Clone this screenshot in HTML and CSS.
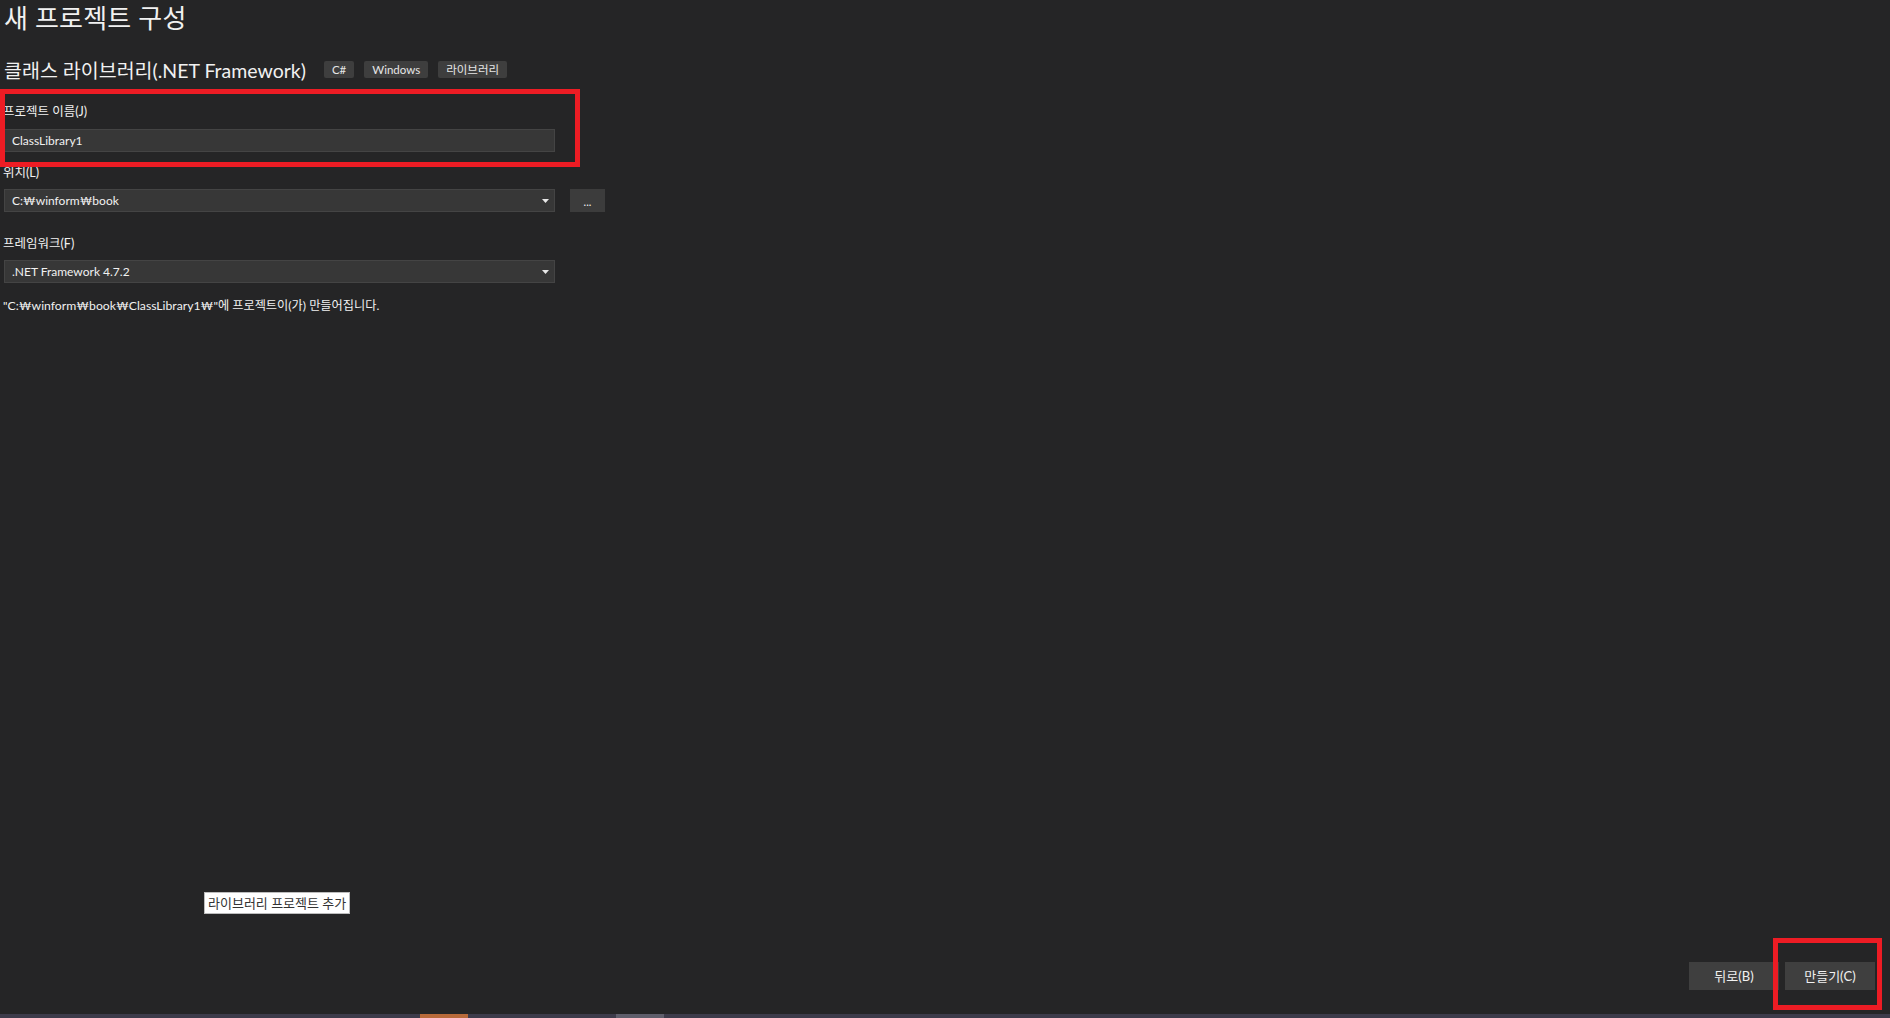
FILE: index.html
```html
<!DOCTYPE html>
<html lang="ko">
<head>
<meta charset="utf-8">
<title>새 프로젝트 구성</title>
<link rel="stylesheet" href="styles.css">
</head>
<body>
<div class="page">
  <main class="content">
    <h1 class="title">새 프로젝트 구성</h1>
    <div class="template-row">
      <h2 class="template-name">클래스 라이브러리(.NET Framework)</h2>
      <div class="tags">
        <span class="tag">C#</span>
        <span class="tag">Windows</span>
        <span class="tag">라이브러리</span>
      </div>
    </div>

    <div class="field field-name">
      <label class="label">프로젝트 이름(J)</label>
      <div class="input">ClassLibrary1</div>
    </div>

    <div class="field field-loc">
      <label class="label">위치(L)</label>
      <div class="input-row">
        <div class="input select">C:₩winform₩book<svg class="arrow" width="7" height="4" viewBox="0 0 7 4"><polygon points="0,0 7,0 3.5,4" fill="#e8e8e8"/></svg></div>
        <button class="browse">...</button>
      </div>
    </div>

    <div class="field field-fw">
      <label class="label">프레임워크(F)</label>
      <div class="input select">.NET Framework 4.7.2<svg class="arrow" width="7" height="4" viewBox="0 0 7 4"><polygon points="0,0 7,0 3.5,4" fill="#e8e8e8"/></svg></div>
    </div>

    <p class="note">"C:₩winform₩book₩ClassLibrary1₩"에 프로젝트이(가) 만들어집니다.</p>
  </main>

  <footer class="actions">
    <button class="btn">뒤로(B)</button>
    <button class="btn">만들기(C)</button>
  </footer>

  <div class="statusbar">
    <span class="seg seg-orange"></span>
    <span class="seg seg-gray"></span>
  </div>

  <div class="highlight hl-name"></div>
  <div class="highlight hl-create"></div>
  <div class="tooltip">라이브러리 프로젝트 추가</div>
</div>
</body>
</html>
```

FILE: styles.css
```css
* { box-sizing: border-box; }
html, body {
  margin: 0;
  padding: 0;
  background: #252526;
}
body {
  font-family: Lato, "Noto Sans CJK KR", sans-serif;
  color: #f1f1f1;
}
.page {
  position: relative;
  width: 1890px;
  height: 1018px;
  display: flex;
  flex-direction: column;
  overflow: hidden;
}
.content {
  flex: 1;
  padding-left: 4px;
}
.title {
  margin: 0;
  height: 36px;
  line-height: 36px;
  font-size: 26px;
  font-weight: 400;
  letter-spacing: 0.2px;
}
.template-row {
  margin-top: 20px;
  height: 30px;
  display: flex;
  align-items: center;
  gap: 18px;
}
.template-name {
  margin: 0;
  font-size: 19.5px;
  font-weight: 400;
  line-height: 30px;
}
.tags {
  display: flex;
  gap: 10px;
  margin-top: -4px;
}
.tag {
  display: inline-block;
  height: 17px;
  line-height: 17px;
  padding: 0 8px;
  font-size: 11.5px;
  background: #3e3e3e;
  border-radius: 2px;
  color: #e6e6e6;
}
.field { display: flex; flex-direction: column; }
.field-name { margin-top: 17px; }
.field-loc { margin-top: 12px; }
.field-fw { margin-top: 23px; }
.label {
  height: 18px;
  line-height: 18px;
  font-size: 12.5px;
  margin-left: -1px;
  margin-bottom: 8px;
}
.field-loc .label { margin-bottom: 7px; }
.field-fw .label { margin-bottom: 7px; }
.input {
  width: 551px;
  height: 23px;
  line-height: 21px;
  padding-left: 7px;
  font-size: 12px;
  background: #373737;
  border: 1px solid #444444;
  color: #f1f1f1;
  position: relative;
}
.select { display: flex; align-items: center; justify-content: space-between; padding-right: 5px; }
.arrow { flex: none; }
.input-row { display: flex; gap: 15px; }
.browse {
  width: 35px;
  height: 23px;
  background: #3c3c3c;
  border: none;
  color: #f1f1f1;
  font-family: inherit;
  font-size: 11px;
  padding: 0;
  line-height: 26px;
}
.note {
  margin: 14px 0 0 -1px;
  height: 18px;
  line-height: 18px;
  font-size: 12.2px;
}
.actions {
  display: flex;
  justify-content: flex-end;
  gap: 6px;
  padding-right: 15px;
  margin-bottom: 24px;
}
.btn {
  width: 90px;
  height: 28px;
  background: #3f3f3f;
  border: none;
  color: #f1f1f1;
  font-family: inherit;
  font-size: 13px;
  padding: 0 0 2px 0;
}
.statusbar {
  height: 4px;
  background: #3d3b4a;
  position: relative;
  flex: none;
}
.seg { position: absolute; top: 0; height: 4px; }
.seg-orange { left: 420px; width: 48px; background: #b86a3a; }
.seg-gray { left: 616px; width: 48px; background: #5f5e6b; }
.highlight {
  position: absolute;
  border: 5px solid #ed1c24;
  pointer-events: none;
}
.hl-name { left: 0; top: 89px; width: 580px; height: 78px; }
.hl-create { left: 1773px; top: 938px; width: 109px; height: 72px; }
.tooltip {
  position: absolute;
  left: 204px;
  top: 892px;
  height: 22px;
  line-height: 20px;
  padding: 0 3px;
  background: #ffffff;
  border: 1px solid #bdbdbd;
  color: #333333;
  font-size: 13px;
  white-space: nowrap;
}
```
